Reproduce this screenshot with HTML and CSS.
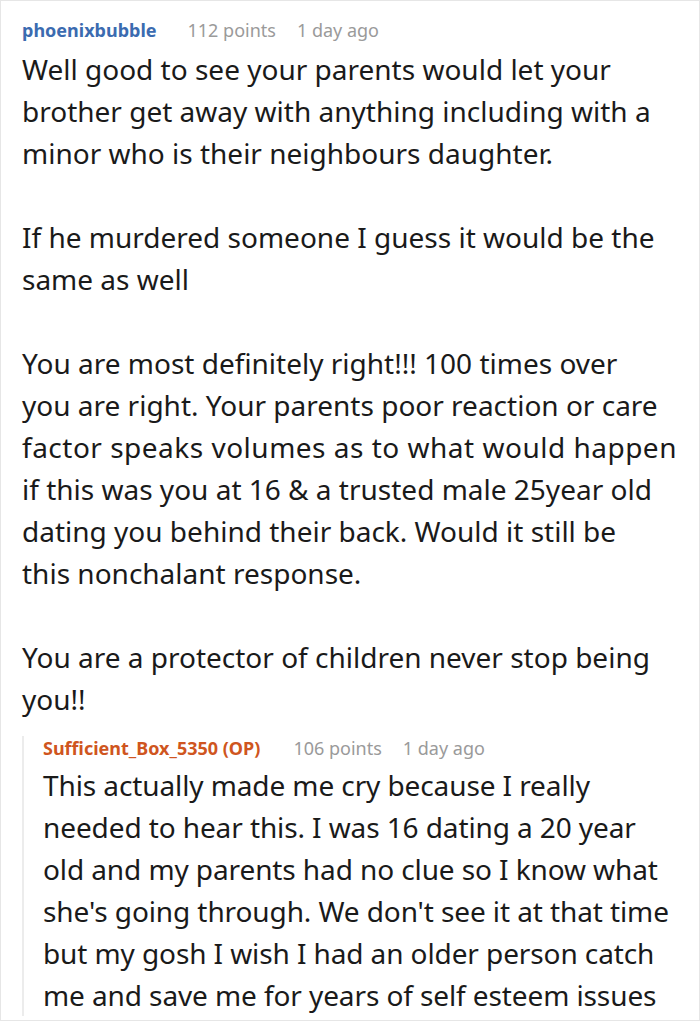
FILE: index.html
```html
<!DOCTYPE html>
<html>
<head>
<meta charset="utf-8">
<link rel="stylesheet" href="styles.css">
</head>
<body>
<div class="frame">
  <div class="comment">
    <div class="meta">
      <span class="user">phoenixbubble</span>
      <span class="info">112 points</span>
      <span class="info">1 day ago</span>
    </div>
    <div class="text">
      <p>Well good to see your parents would let your<br>brother get away with anything including with a<br>minor who is their neighbours daughter.</p>
      <p>If he murdered someone I guess it would be the<br>same as well</p>
      <p>You are most definitely right!!! 100 times over<br>you are right. Your parents poor reaction or care<br><span class="wide">factor speaks volumes as to what would happen</span><br>if this was you at 16 &amp; a trusted male 25year old<br>dating you behind their back. Would it still be<br>this nonchalant response.</p>
      <p>You are a protector of children never stop being<br>you!!</p>
    </div>
    <div class="reply">
      <div class="meta">
        <span class="user op">Sufficient_Box_5350 (OP)</span>
        <span class="info">106 points</span>
        <span class="info">1 day ago</span>
      </div>
      <div class="text">
        <p>This actually made me cry because I really<br>needed to hear this. I was 16 dating a 20 year<br>old and my parents had no clue so I know what<br>she's going through. We don't see it at that time<br>but my gosh I wish I had an older person catch<br>me and save me for years of self esteem issues</p>
      </div>
    </div>
  </div>
</div>
</body>
</html>
```
FILE: styles.css
```css
html, body {
  margin: 0;
  padding: 0;
  background: #fff;
}
.frame {
  width: 700px;
  height: 1021px;
  box-sizing: border-box;
  border: 1px solid #e6e6e6;
  overflow: hidden;
  font-family: "Noto Sans", sans-serif;
  color: #1a1a1a;
}
.comment {
  padding: 17px 4px 0 21px;
}
.meta {
  display: flex;
  font-size: 18px;
  line-height: 24px;
  white-space: nowrap;
}
.user {
  font-weight: 700;
  color: #3b6bb0;
  margin-right: 31px;
}
.user.op {
  color: #cf5520;
  margin-right: 33px;
}
.info {
  color: #9a9a9a;
  margin-right: 21px;
}
.text {
  margin-top: 6px;
  font-size: 28px;
  line-height: 42px;
  white-space: nowrap;
}
.text p {
  margin: 0 0 42px 0;
}
.text p:last-child {
  margin-bottom: 0;
}
.wide {
  letter-spacing: 0.5px;
}
.reply {
  margin-top: 16px;
  border-left: 2px solid #ececec;
  padding-left: 19px;
}
.reply .text {
  margin-top: 4px;
  letter-spacing: -0.1px;
}
```
